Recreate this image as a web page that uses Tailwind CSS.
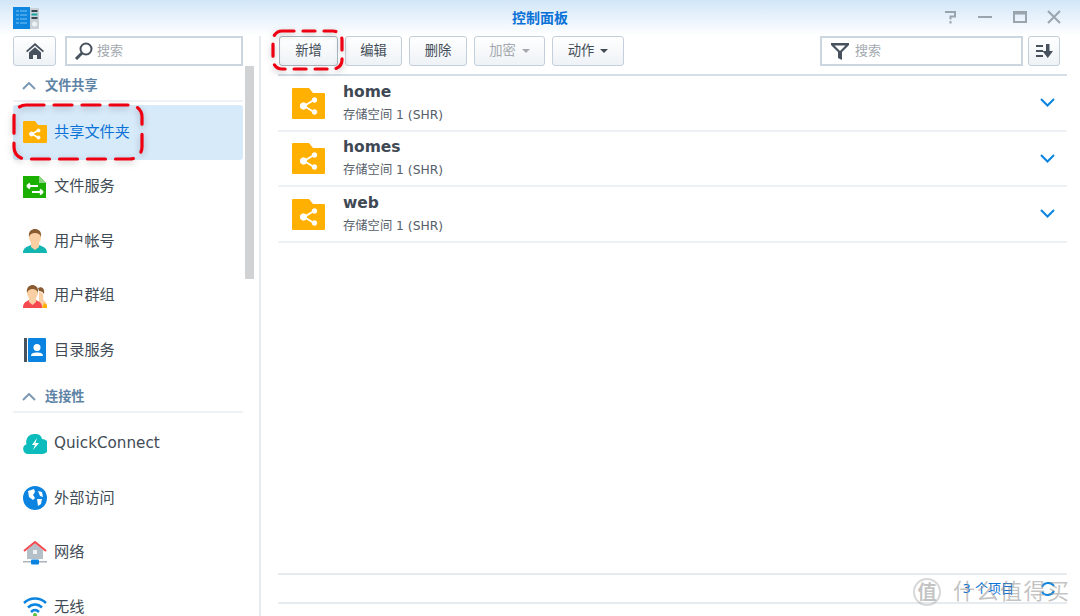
<!DOCTYPE html>
<html lang="zh">
<head>
  <meta charset="UTF-8" />
  <title>控制面板</title>
  <script src="https://cdn.jsdelivr.net/npm/@tailwindcss/browser@4"></script>
</head>
<body class="relative w-[1080px] h-[616px] overflow-hidden bg-white text-[#414b55] font-['DejaVu_Sans','Noto_Sans_CJK_SC',sans-serif]">

  <!-- title bar -->
  <header class="relative h-[36px] flex items-center justify-between pl-[13px] pr-[19px] bg-gradient-to-b from-[#d2e6f8] to-white">
    <svg width="26" height="23" viewBox="0 0 26 23">
      <rect x="0" y="0" width="17" height="22" fill="#0e86e0"/>
      <path d="M3 4h3M7 4h7M3 8h3M7 8h7M3 12h3M7 12h7M3 16h3M7 16h7" stroke="#7cc4f2" stroke-width="1"/>
      <rect x="17" y="1" width="9" height="21" fill="#c9d0d6"/>
      <rect x="18.500" y="3" width="6" height="2" fill="#3a4652"/>
      <rect x="18.500" y="6.500" width="6" height="2" fill="#1aa6a0"/>
      <rect x="18.500" y="10" width="6" height="2" fill="#3a4652"/>
      <circle cx="21.500" cy="17" r="2.500" fill="#eef2f5"/>
    </svg>
    <h1 class="absolute left-0 right-0 text-center text-[14px] font-bold text-[#0a72d6]">控制面板</h1>
    <div class="flex items-center gap-[20.500px] -translate-y-px">
      <svg width="14" height="14" viewBox="0 0 14 14" fill="none" stroke="#9aa4ad" stroke-width="2"><path d="M1 2h10v4.500H6.500v3"/><path d="M6.500 11v2.500"/></svg>
      <svg width="14" height="14" viewBox="0 0 14 14"><rect x="0" y="6" width="14" height="2" fill="#9aa4ad"/></svg>
      <svg width="14" height="12" viewBox="0 0 14 12" fill="none"><rect x="1" y="1" width="12" height="10" stroke="#9aa4ad" stroke-width="2"/><rect x="1" y="1" width="12" height="2.500" fill="#9aa4ad"/></svg>
      <svg width="14" height="14" viewBox="0 0 14 14" fill="none" stroke="#9aa4ad" stroke-width="2"><path d="M1 1l12 12M13 1L1 13"/></svg>
    </div>
  </header>

  <div class="flex h-[580px]">
    <!-- sidebar -->
    <aside class="relative w-[261px] shrink-0 border-r-2 border-[#e8ebee] overflow-hidden pl-[13px]">
      <div class="flex w-[230px] gap-[9px]">
        <button class="w-[43px] h-[30px] flex items-center justify-center rounded-[3px] border border-[#c3cfdb] bg-gradient-to-b from-white to-[#eef2f6]">
          <svg width="18" height="16" viewBox="0 0 18 16" fill="#47525e"><path d="M9 0L0 8l1.200 1.300L9 2.500l7.800 6.800L18 8z"/><path d="M3 9.500L9 4.300l6 5.200V16h-4v-4H7v4H3z"/></svg>
        </button>
        <div class="flex-1 h-[30px] flex items-center gap-[4px] pl-[7px] border-2 border-[#ccd6e0] bg-white">
          <svg width="19" height="18" viewBox="0 0 19 18" fill="none" stroke="#47525e"><circle cx="12" cy="7" r="5.500" stroke-width="2"/><path d="M8 11l-6 6" stroke-width="3"/></svg>
          <span class="text-[13px] text-[#a3a9af]">搜索</span>
        </div>
      </div>

      <div class="w-[230px]">
        <div class="h-[36px] flex items-center gap-[9px] pl-[9px] pt-[6px] border-b-2 border-[#eef2f6]">
          <svg width="14" height="8" viewBox="0 0 14 8" fill="none" stroke="#7d9ab5" stroke-width="2"><path d="M1 7l6-6 6 6"/></svg>
          <span class="text-[13.200px] font-bold text-[#5d83a5]">文件共享</span>
        </div>
        <div class="mt-[3px] h-[54.500px] flex items-center gap-[7px] pl-[10px] rounded-[3px] bg-[#d7eafa] text-[15.200px] text-[#0a72d6]">
          <svg class="shrink-0" width="24" height="24" viewBox="0 0 24 24"><path d="M0 2a1 1 0 0 1 1-1h11l3 4h8a1 1 0 0 1 1 1v16a1 1 0 0 1-1 1H1a1 1 0 0 1-1-1z" fill="#ffb000"/><g fill="#fff" stroke="#fff"><path d="M9 14l6-3.500M9 14l6 3.500" stroke-width="1.500"/><circle cx="8.500" cy="14" r="2"/><circle cx="15.500" cy="10.500" r="1.500"/><circle cx="15.500" cy="17.500" r="1.500"/></g></svg>
          <span>共享文件夹</span>
        </div>
        <div class="h-[54.500px] flex items-center gap-[7px] pl-[10px] text-[15.200px]">
          <svg class="shrink-0" width="24" height="24" viewBox="0 0 24 24"><path d="M0 1h16l7 7v15H0z" fill="#1bb000"/><path d="M16 1l7 7h-7z" fill="#8bd680"/><path d="M4 11h11M4 11l3-2.500M4 11l3 2.500M20 17H9M20 17l-3-2.500M20 17l-3 2.500" fill="none" stroke="#fff" stroke-width="2"/></svg>
          <span>文件服务</span>
        </div>
        <div class="h-[54.500px] flex items-center gap-[7px] pl-[10px] text-[15.200px]">
          <svg class="shrink-0" width="24" height="24" viewBox="0 0 24 24"><path d="M0 24c0-5 3-6 8-8h8c5 2 8 3 8 8z" fill="#12b5b0"/><path d="M8 13h8v5l-4 3-4-3z" fill="#f9cfa3"/><ellipse cx="12" cy="8" rx="6" ry="7.500" fill="#f9cfa3"/><path d="M6 8C5 2 9 0 12 0s7 2 6 8c-1-3-3-4-6-4S7 5 6 8z" fill="#8a5a30"/></svg>
          <span>用户帐号</span>
        </div>
        <div class="h-[54.500px] flex items-center gap-[7px] pl-[10px] text-[15.200px]">
          <svg class="shrink-0" width="24" height="24" viewBox="0 0 24 24"><path d="M16 8c4 0 5 3 4 7l4 5v4h-8z" fill="#f9cfa3"/><path d="M15 4c4-2 7 1 6 6-1-2-3-3-5-3z" fill="#8a5a30"/><path d="M19 24l2-5 3 2v3z" fill="#ffb000"/><path d="M0 24c0-5 2-6 6-8h7c4 2 6 3 6 8z" fill="#f4494e"/><path d="M6 13h7v5l-3.500 3L6 18z" fill="#f9cfa3"/><ellipse cx="9.500" cy="8.500" rx="5.500" ry="7" fill="#f9cfa3"/><path d="M4 9C3 3 7 1 9.500 1S16 3 15 9c-1-3-3-4-5.500-4S5 6 4 9z" fill="#8a5a30"/></svg>
          <span>用户群组</span>
        </div>
        <div class="h-[54.500px] flex items-center gap-[8px] pl-[10px] text-[15.200px]">
          <svg class="shrink-0" width="23" height="24" viewBox="0 0 23 24"><rect x="1" y="0" width="3" height="24" fill="#47525e"/><rect x="5" y="0" width="18" height="24" rx="1" fill="#0a84e0"/><circle cx="14" cy="9.500" r="3.500" fill="#fff"/><path d="M8 18c0-3 3-3.500 6-3.500s6 .5 6 3.500z" fill="#fff"/></svg>
          <span>目录服务</span>
        </div>

        <div class="h-[35px] flex items-center gap-[9px] pl-[9px] pt-[6px] border-b-2 border-[#eef2f6]">
          <svg width="14" height="8" viewBox="0 0 14 8" fill="none" stroke="#7d9ab5" stroke-width="2"><path d="M1 7l6-6 6 6"/></svg>
          <span class="text-[13.200px] font-bold text-[#5d83a5]">连接性</span>
        </div>
        <div class="mt-[4px] h-[54.500px] flex items-center gap-[7px] pl-[10px] text-[15.200px]">
          <svg class="shrink-0" width="24" height="21" viewBox="0 0 24 21"><path d="M5 21a5 5 0 0 1-1.500-9.700A8 8 0 0 1 12 1a6 6 0 0 1 7 5 7.500 7.500 0 0 1 0 15z" fill="#0cbcbc"/><path d="M14 5l-5 7h3l-2 5 6-7h-3.500z" fill="#fff"/></svg>
          <span>QuickConnect</span>
        </div>
        <div class="h-[54.500px] flex items-center gap-[7px] pl-[10px] text-[15.200px]">
          <svg class="shrink-0" width="24" height="24" viewBox="0 0 24 24"><circle cx="12" cy="12" r="12" fill="#0a84e0"/><path d="M5 5l6-2 1 3-2 3 2 3-2 2-4-3zM14 13h5l-1 5-3 2zM15 5l4 1 1 5-3-1z" fill="#fff"/></svg>
          <span>外部访问</span>
        </div>
        <div class="h-[54.500px] flex items-center gap-[7px] pl-[10px] text-[15.200px]">
          <svg class="shrink-0" width="24" height="24" viewBox="0 0 24 24"><path d="M4 9l8-7 8 7v9H4z" fill="#b5bfc8"/><path d="M1 10l11-9 11 9" fill="none" stroke="#f4494e" stroke-width="2"/><rect x="10" y="9" width="4" height="4" fill="#eef2f5"/><rect x="0" y="20" width="24" height="1.500" fill="#a9b4be"/><rect x="8" y="18.500" width="8" height="5" rx="1" fill="#0a84e0"/></svg>
          <span>网络</span>
        </div>
        <div class="h-[54.500px] flex items-center gap-[7px] pl-[10px] text-[15.200px]">
          <svg class="shrink-0" width="24" height="20" viewBox="0 0 24 20" fill="none" stroke-width="2.500"><path d="M1 6c6-6 16-6 22 0M5 10.500c4-4 10-4 14 0" stroke="#0a84e0"/><path d="M8 15c2.500-2.500 5.500-2.500 8 0" stroke="#0a84e0"/><circle cx="12" cy="18" r="2" fill="#58c442" stroke="none"/></svg>
          <span>无线</span>
        </div>
      </div>

      <!-- scrollbar -->
      <div class="absolute left-[245px] top-[30px] w-[9px] h-[213px] bg-[#d0d2d4]"></div>
    </aside>

    <!-- main -->
    <main class="flex-1 flex flex-col pl-[17px] pr-[13px]">
      <div class="h-[40px] flex items-start gap-[7px] pl-[1px] pr-[7px] border-b-2 border-[#d5dee7] text-[13.300px]">
        <button class="w-[59px] h-[30px] rounded-[3px] border border-[#a9b6c2] bg-gradient-to-b from-white to-[#eef2f6]">新增</button>
        <button class="w-[57px] h-[30px] rounded-[3px] border border-[#c3cfdb] bg-gradient-to-b from-white to-[#eef2f6]">编辑</button>
        <button class="w-[58px] h-[30px] rounded-[3px] border border-[#c3cfdb] bg-gradient-to-b from-white to-[#eef2f6]">删除</button>
        <button class="w-[71px] h-[30px] flex items-center justify-center gap-[6px] rounded-[3px] border border-[#c3cfdb] bg-gradient-to-b from-white to-[#eef2f6] text-[#a3a9af]">加密<span class="w-0 h-0 border-x-[4px] border-x-transparent border-t-[4px] border-t-[#a3a9af]"></span></button>
        <button class="w-[72px] h-[30px] flex items-center justify-center gap-[6px] rounded-[3px] border border-[#c3cfdb] bg-gradient-to-b from-white to-[#eef2f6]">动作<span class="w-0 h-0 border-x-[4px] border-x-transparent border-t-[4px] border-t-[#414b55]"></span></button>
        <div class="ml-auto mr-[-2px] w-[203px] h-[30px] flex items-center gap-[6px] pl-[9px] border-2 border-[#ccd6e0] bg-white">
          <svg width="18" height="18" viewBox="0 0 18 18" fill="#47525e"><path d="M0 1h18v2l-7 7v8l-4-2v-6L0 3z"/><path d="M3.500 3.500h11L9 9z" fill="#fff"/></svg>
          <span class="text-[13px] text-[#a3a9af]">搜索</span>
        </div>
        <button class="w-[32px] h-[30px] flex items-center justify-center rounded-[3px] border border-[#c3cfdb] bg-gradient-to-b from-white to-[#eef2f6]">
          <svg width="17" height="14" viewBox="0 0 17 14" fill="#47525e"><rect x="0" y="1" width="7" height="2"/><rect x="0" y="6" width="7" height="2"/><rect x="0" y="11" width="7" height="2"/><path d="M10 0h3.500v7H17l-5.250 7L6.500 7H10z"/></svg>
        </button>
      </div>

      <div class="flex-1">
        <div class="h-[55.500px] flex items-center border-b-2 border-[#edf0f4] pl-[14px] pr-[12px]">
          <svg class="shrink-0" width="33" height="32" viewBox="0 0 33 32"><path d="M0 2a1 1 0 0 1 1-1h16l4 5h11a1 1 0 0 1 1 1v24a1 1 0 0 1-1 1H1a1 1 0 0 1-1-1z" fill="#ffb000"/><g fill="#fff" stroke="#fff"><path d="M12 19l10-6M12 19l10 6" stroke-width="2"/><circle cx="11.500" cy="19" r="3.200"/><circle cx="22.500" cy="13" r="2.300"/><circle cx="22.500" cy="25" r="2.300"/></g></svg>
          <div class="ml-[18px] flex-1">
            <div class="text-[15.500px] leading-[20px] font-bold text-[#3f4954]">home</div>
            <div class="text-[12.300px] leading-[18px] mt-[4px] text-[#56606a]">存储空间 1 (SHR)</div>
          </div>
          <svg width="15" height="9" viewBox="0 0 15 9" fill="none" stroke="#0a84e0" stroke-width="2"><path d="M1 1l6.500 6.500L14 1"/></svg>
        </div>
        <div class="h-[55.500px] flex items-center border-b-2 border-[#edf0f4] pl-[14px] pr-[12px]">
          <svg class="shrink-0" width="33" height="32" viewBox="0 0 33 32"><path d="M0 2a1 1 0 0 1 1-1h16l4 5h11a1 1 0 0 1 1 1v24a1 1 0 0 1-1 1H1a1 1 0 0 1-1-1z" fill="#ffb000"/><g fill="#fff" stroke="#fff"><path d="M12 19l10-6M12 19l10 6" stroke-width="2"/><circle cx="11.500" cy="19" r="3.200"/><circle cx="22.500" cy="13" r="2.300"/><circle cx="22.500" cy="25" r="2.300"/></g></svg>
          <div class="ml-[18px] flex-1">
            <div class="text-[15.500px] leading-[20px] font-bold text-[#3f4954]">homes</div>
            <div class="text-[12.300px] leading-[18px] mt-[4px] text-[#56606a]">存储空间 1 (SHR)</div>
          </div>
          <svg width="15" height="9" viewBox="0 0 15 9" fill="none" stroke="#0a84e0" stroke-width="2"><path d="M1 1l6.500 6.500L14 1"/></svg>
        </div>
        <div class="h-[55.500px] flex items-center border-b-2 border-[#edf0f4] pl-[14px] pr-[12px]">
          <svg class="shrink-0" width="33" height="32" viewBox="0 0 33 32"><path d="M0 2a1 1 0 0 1 1-1h16l4 5h11a1 1 0 0 1 1 1v24a1 1 0 0 1-1 1H1a1 1 0 0 1-1-1z" fill="#ffb000"/><g fill="#fff" stroke="#fff"><path d="M12 19l10-6M12 19l10 6" stroke-width="2"/><circle cx="11.500" cy="19" r="3.200"/><circle cx="22.500" cy="13" r="2.300"/><circle cx="22.500" cy="25" r="2.300"/></g></svg>
          <div class="ml-[18px] flex-1">
            <div class="text-[15.500px] leading-[20px] font-bold text-[#3f4954]">web</div>
            <div class="text-[12.300px] leading-[18px] mt-[4px] text-[#56606a]">存储空间 1 (SHR)</div>
          </div>
          <svg width="15" height="9" viewBox="0 0 15 9" fill="none" stroke="#0a84e0" stroke-width="2"><path d="M1 1l6.500 6.500L14 1"/></svg>
        </div>
      </div>

      <!-- footer -->
      <div class="h-[31px] mb-[12px] flex items-center justify-end gap-[25px] pr-[10px] border-y-2 border-y-[#e6ebf0] text-[13px] text-[#0a72d6]">
        <span>3 个项目</span>
        <svg width="18" height="16" viewBox="0 0 18 16" fill="none" stroke="#0a84e0" stroke-width="2"><path d="M3 6a7 7 0 0 1 12-1M15 10a7 7 0 0 1-12 1"/></svg>
      </div>
    </main>
  </div>

  <!-- red dashed highlights -->
  <svg class="absolute left-[11px] top-[102px] drop-shadow-[0_2px_3px_rgba(0,0,0,0.25)]" width="134" height="60" viewBox="0 0 134 60" fill="none"><rect x="3" y="3" width="128" height="54" rx="12" stroke="#ee0012" stroke-width="3.200" stroke-dasharray="18 10" stroke-linecap="round"/></svg>
  <svg class="absolute left-[270px] top-[28px] drop-shadow-[0_2px_3px_rgba(0,0,0,0.25)]" width="75" height="44" viewBox="0 0 75 44" fill="none"><rect x="3" y="3" width="69" height="38" rx="9" stroke="#ee0012" stroke-width="3.200" stroke-dasharray="12 9" stroke-linecap="round"/></svg>

  <!-- watermark -->
  <div class="absolute left-[913px] top-[578px] flex items-center gap-[12px] text-[#8f8f8f]/55">
    <span class="w-[28px] h-[28px] flex items-center justify-center rounded-full border-2 border-[#8f8f8f]/35 text-[19px] font-bold">值</span>
    <span class="text-[22px] leading-[26px] tracking-[1.500px] whitespace-nowrap">什么值得买</span>
  </div>
</body>
</html>
